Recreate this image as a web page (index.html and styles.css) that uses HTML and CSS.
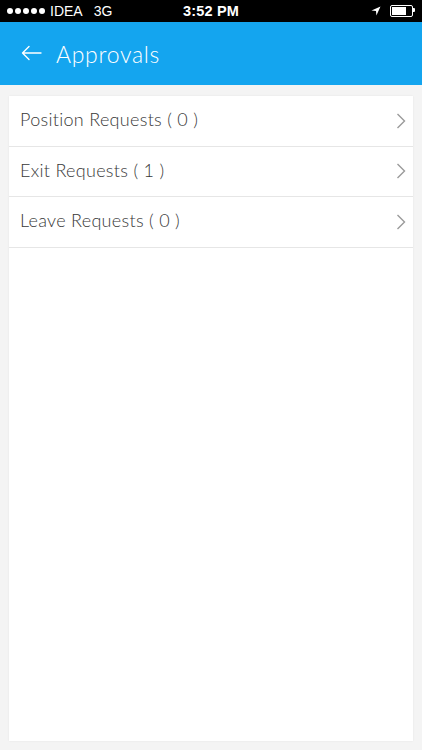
FILE: index.html
```html
<!DOCTYPE html>
<html lang="en">
<head>
  <meta charset="utf-8">
  <meta name="viewport" content="width=device-width,initial-scale=1">
  <title>Approvals</title>
  <link rel="stylesheet" href="styles.css">
</head>
<body>

<!-- ───────── status bar ───────── -->
<div class="status">
  <div class="status-left">
    <span class="dots"><i></i><i></i><i></i><i></i><i></i></span>
    <span>IDEA</span>
    <span class="net">3G</span>
  </div>
  <div class="status-time">3:52 PM</div>
  <div class="status-right">
    <svg width="10" height="10" viewBox="0 0 10 10"><path d="M9.5 0.5 L0.5 4.6 L5 5 L5.4 9.5 Z" fill="#fff"/></svg>
    <span class="battery"><span class="battery-fill"></span></span>
  </div>
</div>

<!-- ───────── app header ───────── -->
<header class="appbar">
  <svg class="back" width="21" height="16" viewBox="0 0 21 16">
    <path d="M20 8 H1.5 M8 1.5 L1.5 8 L8 14.5" fill="none" stroke="#fff" stroke-width="1.4" stroke-linecap="round" stroke-linejoin="round"/>
  </svg>
  <h1>Approvals</h1>
</header>

<!-- ───────── list ───────── -->
<main class="card">
  <a class="row">
    <span>Position Requests ( 0 )</span>
    <svg class="chev" width="10" height="16" viewBox="0 0 10 16"><path d="M1.5 1 L8.5 8 L1.5 15" fill="none" stroke="#9a9a9a" stroke-width="1.4"/></svg>
  </a>
  <a class="row">
    <span>Exit Requests ( 1 )</span>
    <svg class="chev" width="10" height="16" viewBox="0 0 10 16"><path d="M1.5 1 L8.5 8 L1.5 15" fill="none" stroke="#9a9a9a" stroke-width="1.4"/></svg>
  </a>
  <a class="row">
    <span>Leave Requests ( 0 )</span>
    <svg class="chev" width="10" height="16" viewBox="0 0 10 16"><path d="M1.5 1 L8.5 8 L1.5 15" fill="none" stroke="#9a9a9a" stroke-width="1.4"/></svg>
  </a>
</main>

</body>
</html>
```

FILE: styles.css
```css
:root {font-family: Lato, "Open Sans", sans-serif;}
html, body {height:100%}
body   {margin:0;background:#f4f4f4;display:flex;flex-direction:column;
        width:422px;height:750px;overflow:hidden}

/* status bar */
.status {height:22px;background:#000;color:#fff;display:flex;align-items:center;
         justify-content:space-between;padding:0 9px 0 7px;position:relative;
         font-family:"Liberation Sans", Arial, sans-serif;font-size:14px;flex:none}
.status-left {display:flex;align-items:center}
.dots  {display:flex;gap:2px;margin-right:5px}
.dots i{width:6px;height:6px;border-radius:50%;background:#fff}
.net   {margin-left:11px}
.status-time {position:absolute;left:0;right:0;text-align:center;font-weight:bold;
              font-size:14.5px;pointer-events:none;letter-spacing:.2px}
.status-right {display:flex;align-items:center;gap:9px}
.battery {width:19px;height:8px;border:1px solid #fff;border-radius:2px;padding:1px;
          position:relative}
.battery::after {content:"";position:absolute;right:-3px;top:2px;width:2px;height:4px;
                 background:#fff;border-radius:0 1px 1px 0}
.battery-fill {display:block;width:14px;height:8px;background:#fff}

/* header */
.appbar {height:63px;background:#14a5ef;display:flex;align-items:center;
         padding:0 0 0 21px;gap:14px;flex:none}
.appbar h1 {margin:0;color:#fff;font-weight:300;font-size:23px;letter-spacing:.7px}
.back  {margin-top:-1px}

/* list card */
.card  {background:#fff;margin:11px 9px 9px;flex:1;box-shadow:0 0 2px #0001}
.row   {display:flex;align-items:center;justify-content:space-between;height:49.5px;
        border-bottom:1px solid #e6e6e6;padding:0 7px 0 11px;color:#383838;
        font-size:18px;font-weight:300;letter-spacing:.3px;cursor:pointer}
.row span {margin-top:-3px}
```
